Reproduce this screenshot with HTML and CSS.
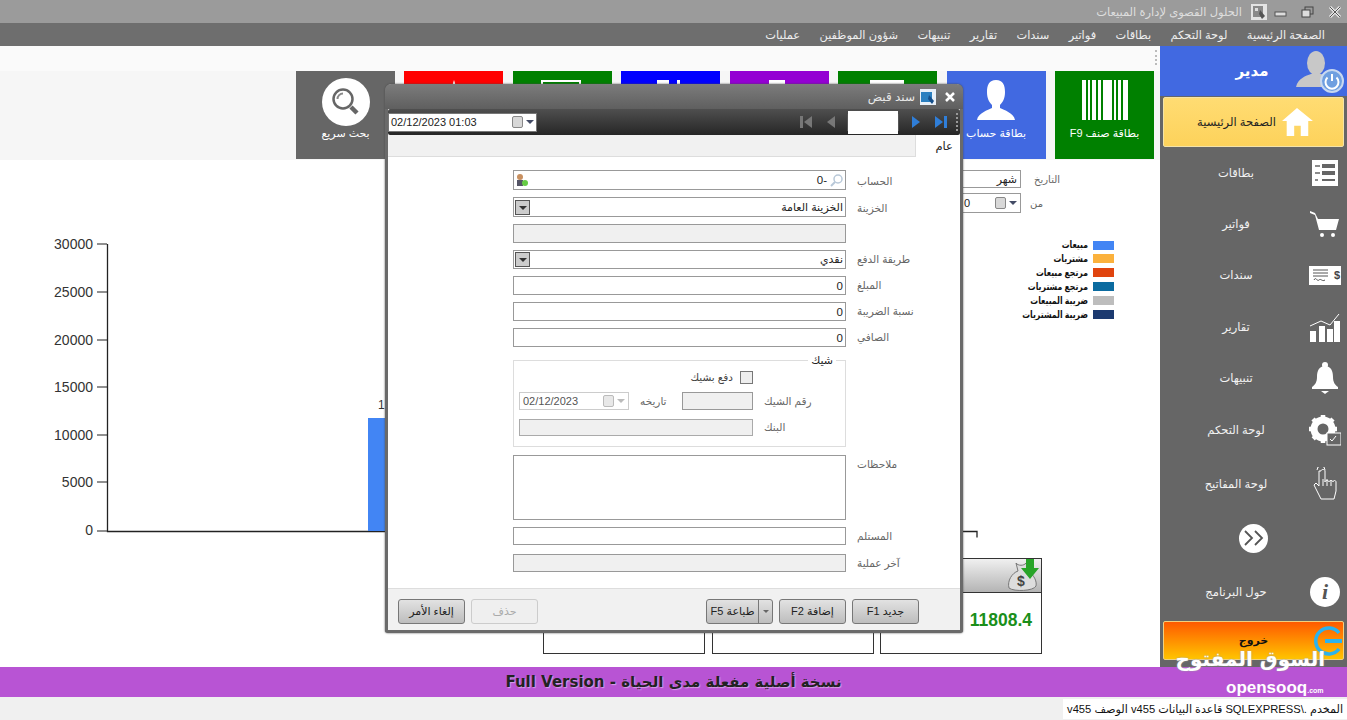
FILE: index.html
```html
<!DOCTYPE html>
<html lang="ar" dir="rtl">
<head>
    <meta charset="UTF-8">
    <title>الحلول القصوى لإدارة المبيعات</title>
    <link rel="stylesheet" href="styles.css">
</head>
<body>
<div class="app">
    <div class="titlebar">
        <div class="win-controls">
            <svg width="24" height="14" viewBox="0 0 24 14"><path d="M7 2l10 10M17 2L7 12" stroke="#e8e8e8" stroke-width="3"/><path d="M7 2l10 10M17 2L7 12" stroke="#555" stroke-width="1"/></svg>
            <svg width="24" height="14" viewBox="0 0 24 14"><rect x="9" y="2" width="8" height="7" fill="none" stroke="#444"/><rect x="6" y="5" width="8" height="7" fill="#ddd" stroke="#444"/></svg>
            <svg width="24" height="14" viewBox="0 0 24 14"><rect x="6" y="7" width="11" height="4" fill="#ddd" stroke="#555"/></svg>
        </div>
        <svg class="app-icon" width="16" height="16" viewBox="0 0 16 16"><rect width="16" height="16" fill="#e4e4e4"/><rect x="2" y="2" width="10" height="11" fill="#8a8a8a"/><rect x="4" y="4" width="3" height="3" fill="#ddd"/><path d="M9 6l5 6-3 3-3-5z" fill="#555"/></svg>
        <span class="app-title">الحلول القصوى لإدارة المبيعات</span>
    </div>

    <div class="menubar">
        <span>الصفحة الرئيسية</span>
        <span>لوحة التحكم</span>
        <span>بطاقات</span>
        <span>فواتير</span>
        <span>سندات</span>
        <span>تقارير</span>
        <span>تنبيهات</span>
        <span>شؤون الموظفين</span>
        <span>عمليات</span>
    </div>

    <div class="main">
        <div class="sidebar">
            <div class="user-box">
                <svg width="48" height="44" viewBox="0 0 48 44">
                    <ellipse cx="20" cy="14" rx="9" ry="12" fill="#c8c8c8"/>
                    <path d="M0 38c2-9 10-11 15-13h10c4 2 8 3 10 6v7z" fill="#c8c8c8"/>
                    <circle cx="36" cy="32" r="11" fill="#6f9fe0" stroke="#c8d8f0" stroke-width="2"/>
                    <path d="M31.500 28.500a6.500 6.500 0 1 0 9 0M36 25v7" fill="none" stroke="#fff" stroke-width="2"/>
                </svg>
                <span class="user-name">مدير</span>
            </div>
            <div class="side-item active">
                <span class="side-icon">
                    <svg width="32" height="30" viewBox="0 0 34 32"><path d="M17 1L1 15h5v16h8V20h7v11h8V15h5z" fill="#fff"/></svg>
                </span>
                <span class="side-label">الصفحة الرئيسية</span>
            </div>
            <div class="side-item">
                <span class="side-icon">
                    <svg width="26" height="26" viewBox="0 0 26 26"><rect width="26" height="26" fill="#fff"/><path d="M3 6h5M3 13h5M3 20h3" stroke="#666" stroke-width="1.500"/><rect x="10" y="4" width="13" height="4" fill="#666"/><rect x="10" y="11" width="13" height="4" fill="#666"/><rect x="10" y="19" width="13" height="2" fill="#666"/></svg>
                </span>
                <span class="side-label">بطاقات</span>
            </div>
            <div class="side-item">
                <span class="side-icon">
                    <svg width="30" height="28" viewBox="0 0 30 28"><path d="M0 1l5 2 3 6h21l-3 11H9L5 5 0 3z" fill="#fff"/><circle cx="12" cy="25" r="2" fill="#fff"/><circle cx="23" cy="25" r="2" fill="#fff"/></svg>
                </span>
                <span class="side-label">فواتير</span>
            </div>
            <div class="side-item">
                <span class="side-icon">
                    <svg width="32" height="19" viewBox="0 0 32 19"><rect width="32" height="19" fill="#fff"/><path d="M4 4h15M4 7h15M4 10h15M5 14c2-4 3 2 5 0s3 2 6 0" stroke="#555" fill="none"/><text x="25" y="13" class="svg-dollar">$</text></svg>
                </span>
                <span class="side-label">سندات</span>
            </div>
            <div class="side-item">
                <span class="side-icon">
                    <svg width="32" height="32" viewBox="0 0 32 32"><path d="M1 15l11-5 9 4 9-11" fill="none" stroke="#fff"/><rect x="1" y="20" width="6" height="11" fill="#fff"/><rect x="10" y="15" width="6" height="16" fill="#fff"/><rect x="18" y="18" width="6" height="13" fill="#fff"/><rect x="25" y="10" width="6" height="21" fill="#fff"/></svg>
                </span>
                <span class="side-label">تقارير</span>
            </div>
            <div class="side-item">
                <span class="side-icon">
                    <svg width="28" height="32" viewBox="0 0 28 32"><circle cx="14" cy="3" r="3" fill="#fff"/><path d="M14 4c-6 0-8 5-8 11 0 5-2 8-5 10v2h26v-2c-3-2-5-5-5-10 0-6-2-11-8-11z" fill="#fff"/><path d="M10 29h8l-4 3z" fill="#fff"/></svg>
                </span>
                <span class="side-label">تنبيهات</span>
            </div>
            <div class="side-item">
                <span class="side-icon">
                    <svg width="32" height="32" viewBox="0 0 32 32"><circle cx="14" cy="15" r="9" fill="none" stroke="#fff" stroke-width="7"/><path d="M14 1v28M0 15h28M4 5l20 20M24 5L4 25" stroke="#fff" stroke-width="4.500" stroke-dasharray="5 18 5"/><rect x="18" y="19" width="14" height="12" fill="#666" stroke="#fff"/><path d="M21 25l2 2 4-5" fill="none" stroke="#fff"/></svg>
                </span>
                <span class="side-label">لوحة التحكم</span>
            </div>
            <div class="side-item tall">
                <span class="side-icon">
                    <svg width="24" height="34" viewBox="0 0 24 34"><path d="M4 3a4 4 0 0 1 8 0" fill="none" stroke="#fff"/><path d="M6 4v15l-3-3-2 2 7 14h13l2-8v-9c0-2-3-2-3 0 0-2-4-2-4 0 0-2-4-2-4 0V4c0-2-4-2-4 0zM10 12v7M14 12v7M18 13v6" fill="#666" stroke="#fff"/></svg>
                </span>
                <span class="side-label">لوحة المفاتيح</span>
            </div>
            <div class="side-item tall">
                <div class="more-btn">
                    <svg width="22" height="18" viewBox="0 0 22 18"><path d="M2 2l7 7-7 7M12 2l7 7-7 7" fill="none" stroke="#555" stroke-width="1.800"/></svg>
                </div>
            </div>
            <div class="side-item tall">
                <span class="side-icon">
                    <span class="info-btn">i</span>
                </span>
                <span class="side-label">حول البرنامج</span>
            </div>
            <div class="exit-btn">خروج</div>
        </div>

        <div class="content">
            <div class="ribbon">
                <div class="tile green">
                    <svg width="48" height="40" viewBox="0 0 48 40"><path d="M1 0h4v40H1zM7 0h2v40H7zM11 0h4v40h-4zM17 0h3v40h-3zM22 0h9v40h-9zM33 0h2v40h-2zM37 0h3v40h-3zM42 0h5v40h-5z" fill="#fff"/></svg>
                    <span>بطاقة صنف F9</span>
                </div>
                <div class="tile blue">
                    <svg width="40" height="40" viewBox="0 0 40 40"><path d="M20 0c-7 0-9 5-9 12 0 6 2 10 5 13v3c-4 2-14 5-15 12h38c-1-7-11-10-15-12v-3c3-3 5-7 5-13 0-7-2-12-9-12z" fill="#fff"/></svg>
                    <span>بطاقة حساب</span>
                </div>
                <div class="tile green">
                    <svg width="40" height="40" viewBox="0 0 40 40"><rect x="2" width="34" height="40" fill="#fff"/></svg>
                </div>
                <div class="tile purple">
                    <svg width="40" height="40" viewBox="0 0 40 40"><rect x="10" width="16" height="40" fill="#fff"/></svg>
                </div>
                <div class="tile pure-blue">
                    <svg width="40" height="40" viewBox="0 0 40 40"><path d="M6 0h12v40H6zM26 0h3v40h-3z" fill="#fff"/></svg>
                </div>
                <div class="tile green">
                    <svg width="44" height="40" viewBox="0 0 44 40"><rect x="2" y="1" width="38" height="38" fill="none" stroke="#fff" stroke-width="2"/></svg>
                </div>
                <div class="tile red">
                    <svg width="40" height="40" viewBox="0 0 40 40"><path d="M20 0l12 40H8z" fill="#fff"/></svg>
                </div>
                <div class="tile gray search-tile">
                    <div class="search-circle">
                        <svg width="30" height="30" viewBox="0 0 30 30"><circle cx="12" cy="12" r="9.500" fill="none" stroke="#666" stroke-width="2.500"/><path d="M6.500 12a5.500 5.500 0 0 1 5.500-5.500" fill="none" stroke="#888" stroke-width="2"/><path d="M20 20l6 6" stroke="#666" stroke-width="4.500"/></svg>
                    </div>
                    <span>بحث سريع</span>
                </div>
            </div>

            <div class="dash">
                <div class="filters">
                    <div class="filter-row">
                        <label>التاريخ</label>
                        <div class="input filter-input">شهر</div>
                    </div>
                    <div class="filter-row">
                        <label class="short">من</label>
                        <div class="input filter-input filter-date">
                            <span class="dropdown-tri"></span>
                            <span class="cal-icon"></span>
                            <span class="filter-val">0</span>
                        </div>
                    </div>
                </div>

                <svg class="chart" width="1160" height="343" viewBox="0 0 1160 343">
                    <path d="M107.500 29v287.500H977v6" fill="none" stroke="#222" stroke-width="1.300"/>
                    <path d="M97 29h10M97 77h10M97 125h10M97 172h10M97 220h10M97 267h10M97 316h10" stroke="#222" stroke-width="1.200"/>
                    <g class="axis-labels">
                        <text x="93" y="34">30000</text>
                        <text x="93" y="82">25000</text>
                        <text x="93" y="130">20000</text>
                        <text x="93" y="177">15000</text>
                        <text x="93" y="225">10000</text>
                        <text x="93" y="272">5000</text>
                        <text x="93" y="320">0</text>
                    </g>
                    <rect x="368" y="203" width="60" height="113" fill="#4285f4"/>
                    <text x="378" y="194" class="bar-label">1</text>
                    <rect x="1093" y="26" width="21" height="9" fill="#4285f4"/>
                    <rect x="1093" y="39" width="21" height="9" fill="#fbb13c"/>
                    <rect x="1093" y="53" width="21" height="9" fill="#e0440e"/>
                    <rect x="1093" y="67" width="21" height="9" fill="#0b6ba0"/>
                    <rect x="1093" y="81" width="21" height="9" fill="#bdbdbd"/>
                    <rect x="1093" y="95" width="21" height="9" fill="#1c3a70"/>
                    <g class="legend" transform="translate(1088 0) scale(.78 1)">
                        <text x="0" y="33">مبيعات</text>
                        <text x="0" y="47">مشتريات</text>
                        <text x="0" y="61">مرتجع مبيعات</text>
                        <text x="0" y="75">مرتجع مشتريات</text>
                        <text x="0" y="89">ضريبة المبيعات</text>
                        <text x="0" y="103">ضريبة المشتريات</text>
                    </g>
                </svg>

                <div class="kpis">
                    <div class="kpi">
                        <div class="kpi-head">
                            <svg width="34" height="34" viewBox="0 0 34 34"><path d="M10 4c2 3 8 3 10 0l2 8c6 4 9 10 8 15-2 5-22 6-27 2C1 22 6 14 12 12z" fill="#ddd" stroke="#777"/><text x="11" y="27" class="svg-bag">$</text><path d="M20 0h8v9h5L24 20 15 9h5z" fill="#28a428"/></svg>
                        </div>
                        <div class="kpi-value">11808.4</div>
                    </div>
                    <div class="kpi"><div class="kpi-head"></div></div>
                    <div class="kpi"><div class="kpi-head"></div></div>
                </div>
            </div>
        </div>
    </div>

    <div class="banner">نسخة أصلية مفعلة مدى الحياة - Full Version</div>
    <div class="statusbar"><span class="status-text">المخدم .\SQLEXPRESS قاعدة البيانات v455 الوصف v455</span></div>

    <div class="dialog">
        <div class="dlg-title">
            <svg width="14" height="14" viewBox="0 0 14 14"><path d="M3 3l8 8M11 3l-8 8" stroke="#fff" stroke-width="2.500"/></svg>
            <svg width="16" height="16" viewBox="0 0 16 16"><rect width="16" height="16" fill="#e8f0f8"/><rect x="1" y="3" width="11" height="10" fill="#2a7fc0"/><path d="M9 6l5 6-2 3-4-5z" fill="#144e8a"/></svg>
            <span class="dlg-name">سند قبض</span>
        </div>
        <div class="dlg-toolbar">
            <span class="grip"></span>
            <button class="nav-btn">
                <svg width="14" height="14" viewBox="0 0 14 14"><path d="M1 1l8 6-8 6z" fill="#2f7ed8"/><rect x="10" y="1" width="3" height="12" fill="#2f7ed8"/></svg>
            </button>
            <button class="nav-btn">
                <svg width="14" height="14" viewBox="0 0 14 14"><path d="M3 1l8 6-8 6z" fill="#2f7ed8"/></svg>
            </button>
            <span class="nav-box"></span>
            <button class="nav-btn">
                <svg width="14" height="14" viewBox="0 0 14 14"><path d="M11 1L3 7l8 6z" fill="#777"/></svg>
            </button>
            <button class="nav-btn">
                <svg width="14" height="14" viewBox="0 0 14 14"><path d="M13 1L5 7l8 6z" fill="#777"/><rect x="1" y="1" width="3" height="12" fill="#777"/></svg>
            </button>
            <div class="dlg-date">
                <span class="date-text">02/12/2023 01:03</span>
                <span class="cal-icon"></span>
                <span class="dropdown-tri"></span>
            </div>
        </div>
        <div class="dlg-tabs"><span class="tab">عام</span></div>

        <div class="dlg-form">
            <div class="form-row big">
                <label>الحساب</label>
                <div class="input field">
                    <svg width="14" height="14" viewBox="0 0 14 14"><circle cx="8" cy="6" r="4" fill="none" stroke="#b8c8d8" stroke-width="1.500"/><path d="M5 9l-4 4" stroke="#b8c8d8" stroke-width="2"/></svg>
                    <span class="val">-0</span>
                    <svg width="14" height="14" viewBox="0 0 14 14"><circle cx="5" cy="4" r="3" fill="#c89060"/><rect x="2" y="7" width="6" height="6" fill="#556"/><circle cx="10" cy="10" r="3" fill="#6c4"/></svg>
                </div>
            </div>
            <div class="form-row big">
                <label>الخزينة</label>
                <div class="input field">
                    <span class="val dark">الخزينة العامة</span>
                    <span class="combo-btn"></span>
                </div>
            </div>
            <div class="form-row">
                <label></label>
                <div class="input field off"></div>
            </div>
            <div class="form-row">
                <label>طريقة الدفع</label>
                <div class="input field">
                    <span class="val dark">نقدي</span>
                    <span class="combo-btn"></span>
                </div>
            </div>
            <div class="form-row">
                <label>المبلغ</label>
                <div class="input field"><span class="val">0</span></div>
            </div>
            <div class="form-row">
                <label>نسبة الضريبة</label>
                <div class="input field"><span class="val">0</span></div>
            </div>
            <div class="form-row">
                <label>الصافي</label>
                <div class="input field"><span class="val">0</span></div>
            </div>

            <div class="check-wrap">
                <fieldset class="check-box">
                    <legend>شيك</legend>
                    <div class="check-row first">
                        <span class="checkbox"></span>
                        <span>دفع بشيك</span>
                    </div>
                    <div class="check-row">
                        <label>رقم الشيك</label>
                        <div class="input off cheque-no"></div>
                        <label class="mid-label">تاريخه</label>
                        <div class="input date-off">
                            <span class="dropdown-tri pale"></span>
                            <span class="cal-icon pale"></span>
                            <span class="date-text">02/12/2023</span>
                        </div>
                    </div>
                    <div class="check-row">
                        <label>البنك</label>
                        <div class="input off bank"></div>
                    </div>
                </fieldset>
            </div>

            <div class="form-row notes">
                <label>ملاحظات</label>
                <div class="input field"></div>
            </div>
            <div class="form-row low">
                <label>المستلم</label>
                <div class="input field"></div>
            </div>
            <div class="form-row low">
                <label>آخر عملية</label>
                <div class="input field off"></div>
            </div>
        </div>

        <div class="dlg-footer">
            <button class="btn">جديد F1</button>
            <button class="btn">إضافة F2</button>
            <div class="btn split">
                <span class="split-arrow"><i></i></span>
                <span class="split-main">طباعة F5</span>
            </div>
            <button class="btn disabled push">حذف</button>
            <button class="btn">إلغاء الأمر</button>
        </div>
    </div>

    <div class="watermark">
        <svg class="wm-ring" width="32" height="32" viewBox="0 0 32 32"><path d="M27 8A13 13 0 1 0 27 24" fill="none" stroke="#2bb3ee" stroke-width="3.500"/><path d="M13 16h17" stroke="#2bb3ee" stroke-width="4"/></svg>
        <div class="wm-ar">السوق المفتوح</div>
        <div class="wm-en">opensooq<small>.com</small></div>
    </div>
</div>
</body>
</html>
```

FILE: styles.css
```css
* {
    box-sizing: border-box;
    margin: 0;
    padding: 0;
}

:root {
    --side: #666666;
    --font: "Liberation Sans", "DejaVu Sans", sans-serif;
}

html, body {
    width: 1347px;
    height: 720px;
    overflow: hidden;
}

body {
    font-family: var(--font);
    font-size: 11px;
    color: #222;
    background: #fff;
}

.app {
    position: relative;
    display: flex;
    flex-direction: column;
    height: 720px;
}

/* top bars */
.titlebar {
    display: flex;
    align-items: center;
    height: 23px;
    background: #9b9b9b;
    color: #dedede;
    font-size: 11.5px;
}

.win-controls {
    display: flex;
    gap: 3px;
    width: 80px;
}

.app-icon {
    margin-left: 9px;
}

.menubar {
    display: flex;
    align-items: center;
    gap: 19.4px;
    height: 23px;
    padding-right: 22px;
    background: #6e6e6e;
    color: #eee;
    font-size: 11.4px;
}

.main {
    display: flex;
    height: 621px;
}

/* sidebar */
.sidebar {
    width: 187px;
    background: var(--side);
    color: #f2f2f2;
    display: flex;
    flex-direction: column;
    font-size: 11.5px;
}

.user-box {
    display: flex;
    align-items: center;
    height: 50px;
    padding-right: 3px;
    background: #4169e1;
    margin-bottom: 1px;
}

.user-name {
    flex: 1;
    padding-left: 48px;
    text-align: center;
    color: #fff;
    font-size: 15px;
    font-weight: bold;
}

.side-item {
    display: flex;
    align-items: center;
    height: 51.4px;
}

.side-item.tall {
    height: 54px;
}

.side-item.tall:nth-last-child(4) {
    margin-top: 2px;
}

.side-item.active {
    height: 50px;
    margin: 0 3px;
    background: linear-gradient(#ffdc73, #fdd25b);
    border: 1px solid #f4e3a8;
    border-radius: 2px;
    color: #222;
}

.side-icon {
    width: 44px;
    display: flex;
    justify-content: center;
    flex-shrink: 0;
}

.side-item.active .side-icon {
    width: 32px;
    margin-right: 30px;
}

.side-label {
    flex: 1;
    padding-left: 9px;
    text-align: center;
}

.side-item.active .side-label {
    padding-left: 28px;
}

.svg-dollar {
    font-size: 11px;
    font-weight: bold;
    fill: #444;
    direction: ltr;
}

.more-btn {
    width: 29px;
    height: 29px;
    margin: 0 auto;
    border-radius: 50%;
    background: #fff;
    display: flex;
    align-items: center;
    justify-content: center;
    direction: ltr;
}

.info-btn {
    width: 30px;
    height: 30px;
    border-radius: 50%;
    background: #fff;
    color: #555;
    font: italic bold 22px/30px "Liberation Serif", serif;
    text-align: center;
}

.exit-btn {
    height: 39px;
    margin: 2px 3px 0;
    border: 1px solid #f0d080;
    border-radius: 2px;
    background: linear-gradient(#ff5a00, #ffc400);
    color: #111;
    font-size: 11px;
    font-weight: bold;
    line-height: 18px;
    padding-top: 9px;
    text-align: center;
}

/* ribbon */
.content {
    flex: 1;
    display: flex;
    flex-direction: column;
    min-width: 0;
}

.ribbon {
    position: relative;
    display: flex;
    gap: 9.43px;
    height: 114px;
    padding: 25px 6px 1px 0;
    background: linear-gradient(#fafafa 25px, #f6f6f6 25px);
    flex-shrink: 0;
}

.ribbon::before {
    content: "";
    position: absolute;
    right: 3px;
    top: 4px;
    height: 15px;
    border-right: 2px dotted #bbb;
}

.tile {
    width: 99px;
    height: 88px;
    padding-top: 9px;
    display: flex;
    flex-direction: column;
    align-items: center;
    gap: 7px;
    color: #fff;
    font-size: 11px;
    flex-shrink: 0;
}

.tile.green { background: #008000; }
.tile.blue { background: #4169e1; }
.tile.purple { background: #9400d3; }
.tile.pure-blue { background: #0000ff; }
.tile.red { background: #ff0000; }
.tile.gray { background: var(--side); }

.search-tile {
    padding-top: 7px;
    gap: 1px;
}

.search-circle {
    width: 48px;
    height: 48px;
    border-radius: 50%;
    background: #fff;
    display: flex;
    align-items: center;
    justify-content: center;
}

/* dashboard area */
.dash {
    flex: 1;
    display: flex;
    flex-direction: column;
    background: #fff;
}

.filters {
    height: 55px;
    padding: 10px 100px 0 0;
    display: flex;
    flex-direction: column;
    gap: 5px;
    flex-shrink: 0;
}

.filter-row {
    display: flex;
    gap: 11px;
    color: #666;
    font-size: 10px;
    align-items: center;
}

.filter-row label {
    width: 28px;
}

.filter-row label.short {
    padding-right: 17px;
}

.input {
    border: 1px solid #999;
    background: #fff;
    display: flex;
    align-items: center;
}

.filter-input {
    width: 61px;
    height: 18px;
    padding: 0 3px;
    color: #222;
    font-size: 11px;
}

.filter-date {
    height: 20px;
    gap: 3px;
}

.filter-val {
    flex: 1;
    text-align: left;
}

.cal-icon {
    width: 11px;
    height: 12px;
    background: #d8d8d8;
    border: 1px solid #888;
    border-radius: 2px;
    display: block;
}

.dropdown-tri {
    width: 0;
    height: 0;
    border-top: 4px solid #444c66;
    border-left: 4px solid transparent;
    border-right: 4px solid transparent;
}

.chart {
    display: block;
    direction: ltr;
    flex-shrink: 0;
}

.axis-labels text {
    font-size: 14px;
    fill: #333;
    text-anchor: end;
}

.bar-label {
    font-size: 12px;
    fill: #333;
}

.legend text {
    font-size: 10px;
    font-weight: bold;
    fill: #111;
    text-anchor: end;
}

.kpis {
    display: flex;
    gap: 6.5px;
    padding-right: 118px;
}

.kpi {
    width: 162px;
    height: 96px;
    border: 1px solid #333;
    background: #fff;
}

.kpi-head {
    height: 34px;
    padding: 0 1px;
    background: linear-gradient(#f0f0f0, #b4b4b4);
    border-bottom: 1px solid #333;
}

.svg-bag {
    font-size: 14px;
    font-weight: bold;
    fill: #444;
    direction: ltr;
}

.kpi-value {
    padding: 17px 9px 0 0;
    color: #1a8f1a;
    font-size: 17.5px;
    font-weight: bold;
}

/* bottom bars */
.banner {
    height: 30px;
    background: #b854d4;
    color: #222;
    font-family: "DejaVu Sans", sans-serif;
    font-size: 15px;
    font-weight: bold;
    line-height: 30px;
    text-align: center;
    text-shadow: 1px 1px 1px #d9a0e8;
}

.statusbar {
    height: 23px;
    background: #f0f0f0;
    display: flex;
}

.status-text {
    padding: 0 4px;
    margin-top: 2px;
    height: 20px;
    background: #fff;
    color: #111;
    font-size: 11.2px;
    line-height: 20px;
}

/* dialog */
.dialog {
    position: absolute;
    left: 385px;
    top: 84px;
    width: 578px;
    height: 549px;
    display: flex;
    flex-direction: column;
    border: 3px solid #6a6a6a;
    border-top: 0;
    border-radius: 6px 6px 3px 3px;
    background: #fff;
    box-shadow: 0 0 2px #444;
}

.dlg-title {
    height: 25px;
    margin: 0 -3px;
    padding: 0 6px;
    display: flex;
    align-items: center;
    gap: 7px;
    border-radius: 6px 6px 0 0;
    background: linear-gradient(#7c7c7c, #5f5f5f);
    color: #e8e8e8;
    font-size: 12px;
    flex-shrink: 0;
}

.dlg-name {
    margin-right: -2px;
}

.dlg-toolbar {
    height: 26px;
    display: flex;
    align-items: center;
    padding-right: 2px;
    background: linear-gradient(#4f4f4f, #262626);
    border-radius: 2px;
    flex-shrink: 0;
}

.grip {
    width: 5px;
    height: 18px;
    border-right: 2px dotted #999;
}

.nav-btn {
    width: 25px;
    height: 26px;
    background: none;
    border: none;
    display: flex;
    align-items: center;
    justify-content: center;
}

.nav-box {
    width: 50px;
    height: 23px;
    margin: 0 5px;
    background: #fff;
    box-shadow: 4px 0 0 -3px #555, -4px 0 0 -3px #555;
}

.dlg-date {
    width: 149px;
    height: 19px;
    margin-right: auto;
    padding: 0 2px;
    display: flex;
    direction: ltr;
    align-items: center;
    gap: 3px;
    background: #fff;
    border: 1px solid #777;
}

.date-text {
    flex: 1;
    color: #222;
    font-size: 11px;
}

.dlg-tabs {
    height: 22px;
    background: #f1f1f1;
    border-bottom: 1px solid #ddd;
    display: flex;
    flex-shrink: 0;
}

.tab {
    width: 45px;
    height: 22px;
    padding-right: 7px;
    background: #fff;
    border-left: 1px solid #ddd;
    color: #222;
    font-size: 11.5px;
    line-height: 22px;
}

.dlg-form {
    height: 431px;
    padding-top: 13px;
    flex-shrink: 0;
}

.form-row {
    display: flex;
    height: 19px;
    margin-bottom: 7px;
    gap: 11px;
}

.form-row.big {
    height: 20px;
}

.form-row label {
    width: 103px;
    padding-top: 3px;
    color: #666;
    font-size: 10.5px;
    text-align: left;
    flex-shrink: 0;
}

.form-row.big label {
    padding-top: 5px;
}

.field {
    width: 333px;
    padding: 0 1px;
    gap: 2px;
}

.input.off {
    background: #f0f0f0;
}

.val {
    flex: 1;
    text-align: right;
    color: #222;
    font-size: 11.5px;
    padding-right: 1px;
}

.val.dark {
    font-size: 11px;
}

.combo-btn {
    width: 15px;
    height: 15px;
    background: #ccc;
    border: 1px solid #555;
    position: relative;
}

.combo-btn::after {
    content: "";
    position: absolute;
    left: 3px;
    top: 5px;
    border-top: 4px solid #333;
    border-left: 4px solid transparent;
    border-right: 4px solid transparent;
}

/* cheque group */
.check-wrap {
    padding-right: 114px;
    margin: 0 0 8px;
}

.check-box {
    width: 333px;
    height: 93px;
    border: 1px solid #ddd;
    padding: 0 5px;
    display: block;
    color: #666;
    font-size: 10.5px;
}

.check-box legend {
    margin-right: 4px;
    padding: 0 3px;
    color: #222;
    font-size: 11px;
}

.check-row {
    display: flex;
    align-items: center;
    height: 18px;
    margin-bottom: 8px;
}

.check-row label {
    width: 87px;
    padding-left: 11px;
    text-align: left;
    white-space: nowrap;
    flex-shrink: 0;
}

.check-row.first {
    height: 14px;
    margin-top: 3px;
    margin-bottom: 8px;
    padding-right: 87px;
    gap: 7px;
    color: #444;
}

.checkbox {
    width: 13px;
    height: 13px;
    background: #eee;
    border: 1px solid #777;
}

.cheque-no {
    width: 71px;
    height: 18px;
    flex-shrink: 0;
}

.check-row .mid-label {
    width: 53px;
    padding: 0 15px 0 11px;
}

.date-off {
    width: 110px;
    height: 18px;
    padding: 0 3px;
    gap: 3px;
    border-color: #ccc;
}

.date-off .date-text {
    direction: ltr;
    text-align: left;
    color: #555;
}

.cal-icon.pale {
    background: #e8e8e8;
    border-color: #bbb;
}

.dropdown-tri.pale {
    border-top-color: #bbb;
}

.input.bank {
    width: 234px;
    height: 17px;
    border-color: #aaa;
}

.form-row.notes {
    height: 65px;
}

.form-row.low {
    height: 18px;
    margin-bottom: 9px;
}

/* dialog buttons */
.dlg-footer {
    height: 42px;
    padding: 10px 41px 0 0;
    display: flex;
    gap: 6px;
    background: #f1f1f1;
    border-top: 1px solid #ddd;
    flex-shrink: 0;
}

.btn {
    width: 67px;
    height: 25px;
    border: 1px solid #777;
    border-radius: 3px;
    background: linear-gradient(#e2e2e2, #bdbdbd);
    color: #222;
    font-family: var(--font);
    font-size: 11px;
}

.btn.disabled {
    border-color: #ccc;
    background: #efefef;
    color: #aaa;
}

.btn.push {
    margin-right: 162px;
}

.split {
    display: flex;
    align-items: center;
}

.split-arrow {
    width: 13px;
    display: flex;
    justify-content: center;
}

.split-arrow i {
    border-top: 3px solid #666;
    border-left: 3px solid transparent;
    border-right: 3px solid transparent;
}

.split-main {
    flex: 1;
    text-align: center;
    border-right: 1px solid #777;
    line-height: 23px;
}

/* site watermark over the screenshot */
.watermark {
    position: absolute;
    left: 1176px;
    top: 625px;
    width: 170px;
    height: 74px;
    color: #fff;
    text-align: center;
}

.wm-ring {
    position: absolute;
    right: 2px;
    top: 0;
}

.wm-ar {
    position: absolute;
    left: 0;
    top: 23px;
    width: 149px;
    font-family: "DejaVu Sans", sans-serif;
    font-size: 20px;
    font-weight: bold;
    line-height: 22px;
    white-space: nowrap;
    text-shadow: 0 0 2px #999;
}

.wm-en {
    position: absolute;
    left: 50px;
    top: 53px;
    direction: ltr;
    font-family: "Liberation Sans", sans-serif;
    font-size: 17px;
    font-weight: bold;
    line-height: 20px;
}

.wm-en small {
    font-size: 7px;
}
```
